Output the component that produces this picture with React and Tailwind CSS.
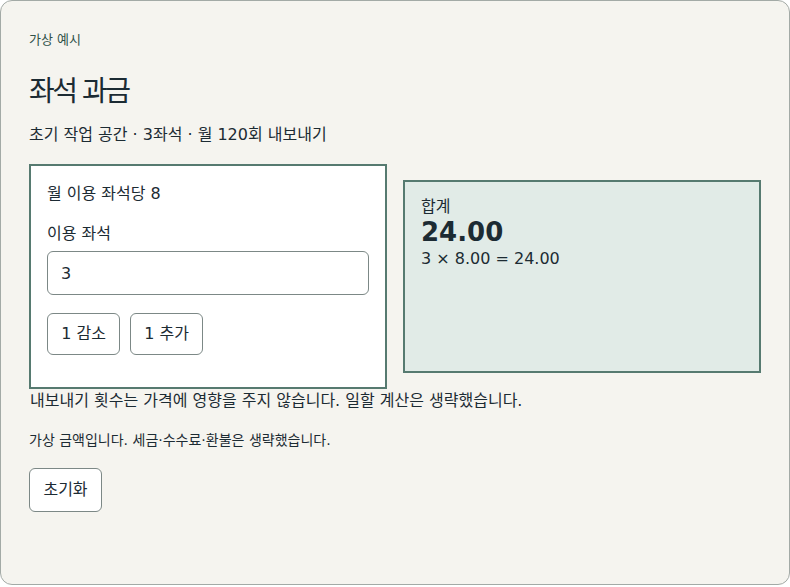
import { useState } from "react";

const PRICE = 8;

export default function App() {
  const [seats, setSeats] = useState(3);
  const total = (seats * PRICE).toFixed(2);

  return (
    <div
      className="w-[790px] min-h-[585px] rounded-xl border border-[#a3aaa6] bg-[#f5f4ef] px-7 pt-7 pb-7 text-[#1c2b33]"
      style={{ fontFamily: '"DejaVu Sans", "Noto Sans CJK KR", sans-serif' }}
    >
      <p className="mt-[2px] text-[13px] leading-[18px] text-[#2f5149]">가상 예시</p>
      <h1 className="mt-[25px] text-[28px] leading-9 tracking-[-2.5px]">좌석 과금</h1>
      <p className="mt-[13px] text-base leading-6">초기 작업 공간 · 3좌석 · 월 120회 내보내기</p>

      <div className="mt-[17px] grid grid-cols-2 gap-4 items-center">
        {/* 입력 패널 */}
        <div className="h-[225px] border-2 border-[#567a70] bg-white px-4 pt-4">
          <p className="text-base leading-6">월 이용 좌석당 8</p>
          <label className="mt-4 block text-base leading-6">이용 좌석</label>
          <input
            value={seats}
            onChange={(e) => setSeats(Number(e.target.value) || 0)}
            className="mt-[5px] h-11 w-full rounded-md border border-[#7c8886] bg-white px-[13px] text-base outline-none"
          />
          <div className="mt-[18px] flex gap-[10px]">
            <button
              onClick={() => setSeats((s) => Math.max(0, s - 1))}
              className="h-[42px] w-[73px] rounded-md border border-[#7c8886] bg-white text-base"
            >
              1 감소
            </button>
            <button
              onClick={() => setSeats((s) => s + 1)}
              className="h-[42px] w-[73px] rounded-md border border-[#7c8886] bg-white text-base"
            >
              1 추가
            </button>
          </div>
        </div>

        {/* 합계 패널 */}
        <div className="h-[193px] border-2 border-[#567a70] bg-[#e1ebe7] px-4 pt-[15px]">
          <p className="text-base leading-5">합계</p>
          <p className="text-[26px] font-bold leading-[30px]">{total}</p>
          <p className="text-base leading-6">
            {seats} × {PRICE.toFixed(2)} = {total}
          </p>
        </div>
      </div>

      <p className="pl-px text-base leading-6">
        내보내기 횟수는 가격에 영향을 주지 않습니다. 일할 계산은 생략했습니다.
      </p>
      <p className="mt-[17px] text-sm leading-5">가상 금액입니다. 세금·수수료·환불은 생략했습니다.</p>
      <button
        onClick={() => setSeats(3)}
        className="mt-[18px] h-11 w-[73px] rounded-md border border-[#7c8886] bg-white text-base"
      >
        초기화
      </button>
    </div>
  );
}
